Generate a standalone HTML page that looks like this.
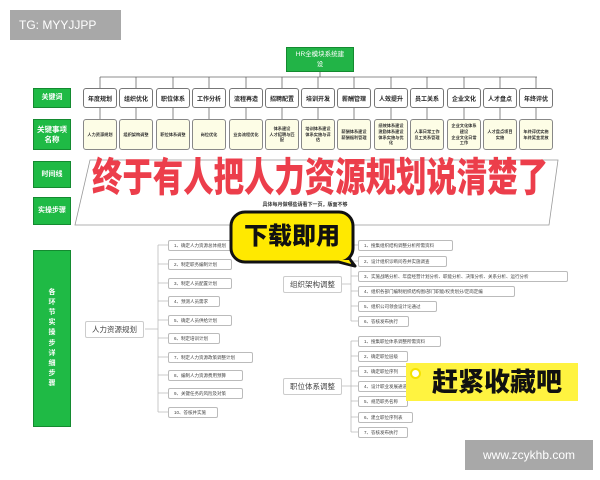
<!DOCTYPE html>
<html><head><meta charset="utf-8"><style>
*{margin:0;padding:0;box-sizing:border-box}
body{width:600px;height:480px;background:#fff;position:relative;overflow:hidden;font-family:"Liberation Sans","Noto Sans CJK SC",sans-serif}
.a{position:absolute}
.g{position:absolute;left:33px;width:38px;background:#1fba45;border:1px solid #148a30;color:#fff;font-size:7px;font-weight:bold;display:flex;align-items:center;justify-content:center;text-align:center;line-height:1.3}
.k{position:absolute;top:88px;width:34px;height:20px;border:1px solid #777;border-radius:3px;background:#fff;font-size:6px;font-weight:bold;color:#222;display:flex;align-items:center;justify-content:center}
.n{position:absolute;top:119px;width:34px;height:31px;border:1px solid #888;border-radius:3px;background:#fdfde6;font-size:4.2px;font-weight:bold;color:#333;display:flex;align-items:center;justify-content:center;text-align:center;line-height:1.4}
.i{position:absolute;height:11px;border:1px solid #bbb;border-radius:2px;background:#fff;font-size:4.5px;color:#444;padding-left:5px;line-height:9px;white-space:nowrap;overflow:hidden}
.p{position:absolute;width:59px;height:17px;border:1px solid #ccc;border-radius:2px;background:#fff;font-size:7.5px;color:#444;display:flex;align-items:center;justify-content:center}
</style></head><body>
<div class="a" style="left:10px;top:10px;width:111px;height:30px;background:#a8a8a8;color:#fff;font-size:12px;line-height:30px;padding-left:9px">TG: MYYJJPP</div>
<div class="a" style="left:286px;top:47px;width:68px;height:25px;background:#22b447;border:1px solid #148a30;color:#fff;font-size:6.5px;text-align:center;line-height:10px;padding-top:2px">HR全模块系统建<br>设</div>
<svg class="a" style="left:0;top:0" width="600" height="480">
<g stroke="#666" stroke-width="0.8" fill="none">
<line x1="320" y1="72" x2="320" y2="77"/><line x1="100" y1="77" x2="537" y2="77"/>
</g>
<g stroke="#555" stroke-width="0.7">
<path d="M100 77v11M136 77v11M173 77v11M209 77v11M246 77v11M282 77v11M318 77v11M354 77v11M391 77v11M427 77v11M464 77v11M500 77v11M536 77v11"/>
<path d="M100 108v11M136 108v11M173 108v11M209 108v11M246 108v11M282 108v11M318 108v11M354 108v11M391 108v11M427 108v11M464 108v11M500 108v11M536 108v11"/>
</g>
<polygon points="90,160 558,160 549,225 75,225" fill="#fff" stroke="#999" stroke-width="0.8"/>
<g stroke="#bbb" stroke-width="0.8" fill="none">
<path d="M145 329h13M158 245v167M158 245h10M158 264h10M158 283h10M158 301h10M158 320h10M158 338h10M158 357h10M158 375h10M158 393h10M158 412h10"/>
<path d="M342 284h9M351 245v76M351 245h7M351 261h7M351 276h7M351 291h7M351 306h7M351 321h7"/>
<path d="M342 386h9M351 341v91M351 341h7M351 356h7M351 371h7M351 386h7M351 401h7M351 417h7M351 432h7"/>
</g>
</svg>
<div class="g" style="top:88px;height:20px">关键词</div>
<div class="g" style="top:119px;height:31px;font-size:7.5px">关键事项<br>名称</div>
<div class="g" style="top:161px;height:27px">时间线</div>
<div class="g" style="top:197px;height:28px">实操步骤</div>
<div class="g" style="top:250px;height:177px;font-size:7px;line-height:1.45">各<br>环<br>节<br>实<br>操<br>步<br>详<br>细<br>步<br>骤</div>

<div class="k" style="left:83px">年度规划</div><div class="k" style="left:119px">组织优化</div><div class="k" style="left:156px">职位体系</div><div class="k" style="left:192px">工作分析</div><div class="k" style="left:229px">流程再造</div><div class="k" style="left:265px">招聘配置</div><div class="k" style="left:301px">培训开发</div><div class="k" style="left:337px">薪酬管理</div><div class="k" style="left:374px">人效提升</div><div class="k" style="left:410px">员工关系</div><div class="k" style="left:447px">企业文化</div><div class="k" style="left:483px">人才盘点</div><div class="k" style="left:519px">年终评优</div>

<div class="n" style="left:83px">人力资源规划</div><div class="n" style="left:119px">组织架构调整</div><div class="n" style="left:156px">职位体系调整</div><div class="n" style="left:192px">岗位优化</div><div class="n" style="left:229px">业务流程优化</div><div class="n" style="left:265px">体系建设<br>人才招聘与匹<br>配</div><div class="n" style="left:301px">培训体系建设<br>体系实施与评<br>估</div><div class="n" style="left:337px">薪酬体系建设<br>薪酬福利管理</div><div class="n" style="left:374px">绩效体系建设<br>激励体系建设<br>体系实施与优<br>化</div><div class="n" style="left:410px">人事日常工作<br>员工关系管理</div><div class="n" style="left:447px">企业文化体系<br>建设<br>企业文化日常<br>工作</div><div class="n" style="left:483px">人才盘点项目<br>实施</div><div class="n" style="left:519px">年终评优实施<br>年终奖金发放</div>

<div class="a" style="left:92px;top:157px;width:600px;height:42px;color:#ec3e4b;font-size:40px;font-weight:900;line-height:42px;white-space:nowrap;transform:scaleX(0.76);transform-origin:left top">终于有人把人力资源规划说清楚了</div>
<div class="a" style="left:230px;top:201px;width:150px;font-size:5px;font-weight:bold;color:#333;text-align:center">具体每月做哪些请看下一页，版面不够</div>

<div class="p" style="left:85px;top:321px">人力资源规划</div>
<div class="i" style="left:168px;top:240px;width:66px">1、确定人力资源总体规划</div>
<div class="i" style="left:168px;top:259px;width:64px">2、制定职务编制计划</div>
<div class="i" style="left:168px;top:278px;width:64px">3、制定人员配置计划</div>
<div class="i" style="left:168px;top:296px;width:52px">4、预测人员需求</div>
<div class="i" style="left:168px;top:315px;width:64px">5、确定人员供给计划</div>
<div class="i" style="left:168px;top:333px;width:52px">6、制定培训计划</div>
<div class="i" style="left:168px;top:352px;width:85px">7、制定人力资源政策调整计划</div>
<div class="i" style="left:168px;top:370px;width:75px">8、编制人力资源费用预算</div>
<div class="i" style="left:168px;top:388px;width:75px">9、关键任务的风险及对策</div>
<div class="i" style="left:168px;top:407px;width:50px">10、答核并实施</div>

<div class="p" style="left:283px;top:276px">组织架构调整</div>
<div class="i" style="left:358px;top:240px;width:95px">1、搜集组织结构调整分析所需资料</div>
<div class="i" style="left:358px;top:256px;width:89px">2、设计组织诊断问卷并实施调查</div>
<div class="i" style="left:358px;top:271px;width:210px">3、实施战略分析、年度经营计划分析、职能分析、决策分析、关系分析、运行分析</div>
<div class="i" style="left:358px;top:286px;width:157px">4、组织各部门编制组织结构图/部门职能/权责划分/定岗定编</div>
<div class="i" style="left:358px;top:301px;width:79px">5、组织公司领会设计论通过</div>
<div class="i" style="left:358px;top:316px;width:51px">6、答核发布执行</div>

<div class="p" style="left:283px;top:378px">职位体系调整</div>
<div class="i" style="left:358px;top:336px;width:83px">1、搜集职位体系调整所需资料</div>
<div class="i" style="left:358px;top:351px;width:50px">2、确定职位层级</div>
<div class="i" style="left:358px;top:366px;width:50px">3、确定职位序列</div>
<div class="i" style="left:358px;top:381px;width:60px">4、设计职业发展通道</div>
<div class="i" style="left:358px;top:396px;width:50px">5、规范职务名称</div>
<div class="i" style="left:358px;top:412px;width:55px">6、建立职位序列表</div>
<div class="i" style="left:358px;top:427px;width:50px">7、答核发布执行</div>

<svg class="a" style="left:225px;top:208px" width="140" height="65"><path d="M120 45 L130 58 L110 53 Z" fill="#ffe900" stroke="#111" stroke-width="3" stroke-linejoin="round"/><rect x="6" y="4" width="122" height="50" rx="14" fill="#ffe900" stroke="#111" stroke-width="3"/><path d="M112 52 L124 52 L126 56 Z" fill="#ffe900"/></svg>
<div class="a" style="left:231px;top:222px;width:122px;text-align:center;font-size:24px;font-weight:900;color:#111;line-height:30px">下载即用</div>

<div class="a" style="left:406px;top:363px;width:172px;height:38px;background:#fff340"></div>
<div class="a" style="left:410px;top:368px;width:11px;height:11px;border-radius:50%;background:#fff;border:2px solid #f5e200"></div>
<div class="a" style="left:432px;top:364px;font-size:26px;font-weight:900;color:#111;line-height:36px">赶紧收藏吧</div>

<div class="a" style="left:465px;top:440px;width:128px;height:30px;background:#a8a8a8;color:#fff;font-size:12px;line-height:30px;text-align:center">www.zcykhb.com</div>
</body></html>
